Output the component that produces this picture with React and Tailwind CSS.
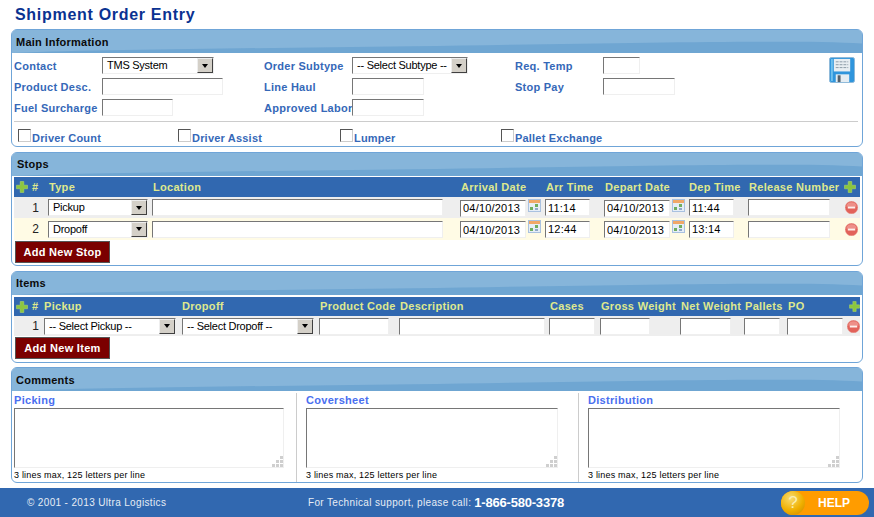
import React from 'react';

const font = { fontFamily: '"Liberation Sans", Arial, sans-serif' };

const inputCls =
  'h-[17px] border border-t-[#767676] border-l-[#767676] border-r-[#efefef] border-b-[#efefef] bg-white px-[2px] text-[11px] tracking-[0.2px] leading-[15px] text-black outline-none';

const stopCols = 'grid grid-cols-[34px_104px_308px_85px_59px_85px_59px_97px_15px]';
const itemCols = 'grid grid-cols-[30px_138px_137px_80px_150px_51px_80px_64px_43px_60px_13px]';

const stops = [
  { n: 1, type: 'Pickup', arr: '11:14', dep: '11:44', bg: 'bg-[#eeeeee] h-[21px]' },
  { n: 2, type: 'Dropoff', arr: '12:44', dep: '13:14', bg: 'bg-[#fffbe5] h-[22px]' },
];

const comments = [
  { label: 'Picking', w: 'w-[283px]', area: 'w-[270px]', border: true },
  { label: 'Coversheet', w: 'w-[273px]', area: 'w-[252px]', border: true },
  { label: 'Distribution', w: 'w-[260px]', area: 'w-[252px]', border: false },
];

function Plus({ className }) {
  return (
    <svg viewBox="0 0 12 12" className={className}>
      <path d="M4.2 0.5h3.6v3.7h3.7v3.6H7.8v3.7H4.2V7.8H0.5V4.2h3.7z" fill="#8cc63e" stroke="#b7dc6c" strokeWidth="0.5" />
    </svg>
  );
}

function Minus({ className }) {
  return (
    <svg viewBox="0 0 13 13" className={className}>
      <circle cx="6.5" cy="6.5" r="6.3" fill="#e2625a" stroke="#e98f88" strokeWidth="0.4" />
      <path d="M1.2 5.5A5.4 5.4 0 0 1 11.8 5.5Z" fill="#ee8f88" />
      <rect x="2.8" y="5.5" width="7.4" height="2" fill="#fdeeec" />
    </svg>
  );
}

function Calendar() {
  return (
    <svg viewBox="0 0 13 13" className="w-[13px] h-[13px] shrink-0">
      <rect x="0" y="0" width="13" height="13" fill="#a9c1e0" />
      <rect x="1" y="1" width="11" height="3" fill="#f0a868" />
      <rect x="1" y="4" width="11" height="8" fill="#e6eef7" />
      <rect x="2" y="8" width="3" height="3" fill="#6fae5f" />
      <rect x="7" y="5" width="3" height="3" fill="#6fae5f" />
      <rect x="7" y="9" width="3" height="2" fill="#8fa8c8" />
    </svg>
  );
}

function SaveIcon() {
  return (
    <svg viewBox="0 0 27 27" className="w-[26px] h-[26px]">
      <rect x="0.5" y="0.5" width="26" height="26" rx="2" fill="#2f95dc" stroke="#8fb8d8" />
      <rect x="2" y="2" width="2" height="23" fill="#6fc0ee" />
      <rect x="5" y="2" width="17" height="13" fill="#e8eef2" />
      <path d="M7 5h13M7 8h13M7 11h13" stroke="#8a9aa6" strokeWidth="1" strokeDasharray="3 1" />
      <rect x="7" y="18" width="14" height="8" fill="#e4edf3" />
      <rect x="9" y="19" width="3" height="7" fill="#55606a" />
    </svg>
  );
}

function Select({ text, className }) {
  return (
    <div className={`h-[17px] flex border border-t-[#767676] border-l-[#767676] border-r-[#efefef] border-b-[#efefef] bg-white ${className}`}>
      <span className="flex-1 min-w-0 pl-1 text-[11px] tracking-[-0.25px] leading-[15px] text-black whitespace-nowrap">{text}</span>
      <span className="w-[16px] h-[15px] shrink-0 flex items-center justify-center bg-[#d4d0c8] border border-t-[#eeeeee] border-l-[#eeeeee] border-r-[#404040] border-b-[#404040]">
        <span className="w-0 h-0 border-x-[3px] border-x-transparent border-t-[4px] border-t-black" />
      </span>
    </div>
  );
}

function Panel({ title, className, titleCls, children }) {
  return (
    <section className={`mx-[11px] w-[852px] border border-[#6fa5d8] rounded-[6px] overflow-hidden bg-white shrink-0 ${className}`}>
      <div className="relative bg-[#6fa6d2]">
        <svg viewBox="0 0 852 24" preserveAspectRatio="none" className="absolute inset-0 w-full h-full">
          <path d="M0 0H852V14C780 10 600 14 400 17C250 19 100 20 0 24Z" fill="#86b5da" />
        </svg>
        <h2 className={`relative h-[23px] text-[11px] font-bold tracking-[0.25px] text-[#0b0b0b] ${titleCls}`}>{title}</h2>
      </div>
      {children}
    </section>
  );
}

function Label({ children }) {
  return <label className="pt-px text-[11px] leading-[17px] font-bold tracking-[0.25px] text-[#3568b8] whitespace-nowrap">{children}</label>;
}

function Check({ label, className }) {
  return (
    <label className={`flex items-start gap-px ${className}`}>
      <span className="w-[13px] h-[13px] border border-t-[#555555] border-l-[#555555] border-r-[#cccccc] border-b-[#cccccc] bg-white" />
      <span className="mt-[2px] text-[11px] leading-[14px] font-bold tracking-[0.2px] text-[#3568b8] whitespace-nowrap">{label}</span>
    </label>
  );
}

function Th({ children }) {
  return <span className="pl-px text-[11px] font-bold tracking-[0.3px] text-[#dfe88e] whitespace-nowrap">{children}</span>;
}

function AddButton({ children }) {
  return (
    <button className="block h-[22px] w-[95px] bg-[#7b0000] border border-[#555555] text-[11px] font-bold tracking-[0.3px] text-white">
      {children}
    </button>
  );
}

export default function App() {
  return (
    <div className="w-[874px] h-[517px] overflow-hidden bg-white flex flex-col" style={font}>
      <h1 className="h-[29px] pl-[15px] text-[16px] leading-[30px] font-bold tracking-[0.7px] text-[#0a3291] shrink-0">
        Shipment Order Entry
      </h1>

      {/* Main Information */}
      <Panel title="Main Information" className="h-[118px]" titleCls="pl-1 leading-[24px]">
        <div className="relative px-[2px] pt-[4px]">
          <div className="grid grid-cols-[88px_162px_88px_163px_88px_1fr] gap-y-[4px] auto-rows-[17px]">
            <Label>Contact</Label>
            <Select text="TMS System" className="w-[112px]" />
            <Label>Order Subtype</Label>
            <Select text="-- Select Subtype --" className="w-[116px]" />
            <Label>Req. Temp</Label>
            <input className={`${inputCls} w-[37px]`} />

            <Label>Product Desc.</Label>
            <input className={`${inputCls} w-[121px]`} />
            <Label>Line Haul</Label>
            <input className={`${inputCls} w-[72px]`} />
            <Label>Stop Pay</Label>
            <input className={`${inputCls} w-[72px]`} />

            <Label>Fuel Surcharge</Label>
            <input className={`${inputCls} w-[71px]`} />
            <Label>Approved Labor</Label>
            <input className={`${inputCls} w-[72px]`} />
          </div>
          <div className="absolute top-[4px] right-[7px]">
            <SaveIcon />
          </div>
          <div className="mt-[5px] mr-[2px] border-t border-[#cccccc]" />
          <div className="flex pt-[7px] pl-[4px]">
            <Check label="Driver Count" className="w-[160px]" />
            <Check label="Driver Assist" className="w-[162px]" />
            <Check label="Lumper" className="w-[161px]" />
            <Check label="Pallet Exchange" />
          </div>
        </div>
      </Panel>

      {/* Stops */}
      <Panel title="Stops" className="h-[114px] mt-[5px]" titleCls="pl-[5px] leading-[22px]">
        <div className="pl-[2px] pr-[2px] pt-px">
          <div className={`${stopCols} h-[20px] bg-[#3168b0] items-center`}>
            <div className="flex items-center pl-[2px] gap-[4px]">
              <Plus className="w-[12px] h-[12px]" />
              <span className="text-[11px] font-bold text-[#dfe88e]">#</span>
            </div>
            <Th>Type</Th>
            <Th>Location</Th>
            <Th>Arrival Date</Th>
            <Th>Arr Time</Th>
            <Th>Depart Date</Th>
            <span className="text-[11px] font-bold tracking-[0.3px] text-[#dfe88e] whitespace-nowrap">Dep Time</span>
            <Th>Release Number</Th>
            <Plus className="w-[12px] h-[12px] -ml-[1px]" />
          </div>
          {stops.map((s) => (
            <div key={s.n} className={`${stopCols} ${s.bg} items-center`}>
              <span className="pr-[9px] text-right text-[12px] text-[#222222]">{s.n}</span>
              <Select text={s.type} className="w-[100px]" />
              <input className={`${inputCls} w-[291px]`} />
              <div className="flex items-start gap-[2px]">
                <input defaultValue="04/10/2013" className={`${inputCls} w-[66px] mt-px`} />
                <Calendar />
              </div>
              <input defaultValue={s.arr} className={`${inputCls} w-[45px]`} />
              <div className="flex items-start gap-[2px]">
                <input defaultValue="04/10/2013" className={`${inputCls} w-[66px] mt-px`} />
                <Calendar />
              </div>
              <input defaultValue={s.dep} className={`${inputCls} w-[45px]`} />
              <input className={`${inputCls} w-[82px]`} />
              <Minus className="w-[13px] h-[13px]" />
            </div>
          ))}
          <div className="pt-px pl-px">
            <AddButton>Add New Stop</AddButton>
          </div>
        </div>
      </Panel>

      {/* Items */}
      <Panel title="Items" className="h-[92px] mt-[5px]" titleCls="pl-1 leading-[22px]">
        <div className="px-[2px] pt-[2px]">
          <div className={`${itemCols} h-[19px] bg-[#3168b0] items-center`}>
            <div className="flex items-center pl-[2px] gap-[4px]">
              <Plus className="w-[12px] h-[12px]" />
              <span className="text-[11px] font-bold text-[#dfe88e]">#</span>
            </div>
            <span className="text-[11px] font-bold tracking-[0.3px] text-[#dfe88e] whitespace-nowrap">Pickup</span>
            <span className="text-[11px] font-bold tracking-[0.3px] text-[#dfe88e] whitespace-nowrap">Dropoff</span>
            <Th>Product Code</Th>
            <Th>Description</Th>
            <Th>Cases</Th>
            <Th>Gross Weight</Th>
            <Th>Net Weight</Th>
            <Th>Pallets</Th>
            <Th>PO</Th>
            <Plus className="w-[11px] h-[11px] ml-[2px]" />
          </div>
          <div className={`${itemCols} h-[20px] bg-[#eeeeee] items-center`}>
            <span className="pr-[5px] text-right text-[12px] text-[#222222]">1</span>
            <Select text="-- Select Pickup --" className="w-[132px]" />
            <Select text="-- Select Dropoff --" className="w-[132px]" />
            <input className={`${inputCls} w-[70px]`} />
            <input className={`${inputCls} w-[146px]`} />
            <input className={`${inputCls} w-[46px]`} />
            <input className={`${inputCls} w-[50px]`} />
            <input className={`${inputCls} w-[51px]`} />
            <input className={`${inputCls} w-[36px]`} />
            <input className={`${inputCls} w-[56px]`} />
            <Minus className="w-[13px] h-[13px]" />
          </div>
          <div className="pt-px pl-px">
            <AddButton>Add New Item</AddButton>
          </div>
        </div>
      </Panel>

      {/* Comments */}
      <Panel title="Comments" className="h-[116px] mt-[4px]" titleCls="pl-1 leading-[24px]">
        <div className="flex pl-[2px] pt-[2px]">
          {comments.map((c) => (
            <div key={c.label} className={`${c.w} h-[89px] ${c.border ? 'border-r border-[#cccccc] mr-[9px]' : ''}`}>
              <div className="text-[11px] leading-[15px] font-bold tracking-[0.3px] text-[#4a6ff0]">{c.label}</div>
              <div className={`relative ${c.area} h-[60px]`}>
                <textarea className="block w-full h-full resize-none border border-t-[#767676] border-l-[#767676] border-r-[#efefef] border-b-[#efefef] bg-white outline-none" />
                <svg viewBox="0 0 11 11" className="absolute right-[1px] bottom-[1px] w-[11px] h-[11px]">
                  <path d="M8 0h3v3H8zM8 4h3v3H8zM4 4h3v3H4zM8 8h3v3H8zM4 8h3v3H4zM0 8h3v3H0z" fill="#cfcfcf" />
                </svg>
              </div>
              <div className="mt-[1px] text-[9px] leading-[13px] tracking-[0.2px] text-black whitespace-nowrap">3 lines max, 125 letters per line</div>
            </div>
          ))}
        </div>
      </Panel>

      {/* Footer */}
      <footer className="mt-[5px] h-[29px] bg-[#3168b0] flex items-center shrink-0">
        <span className="w-[281px] ml-[27px] text-[10px] tracking-[0.35px] text-[#e6edf5]">© 2001 - 2013 Ultra Logistics</span>
        <span className="text-[10px] tracking-[0.35px] text-[#e6edf5] whitespace-nowrap">For Technical support, please call:</span>
        <span className="ml-[3px] text-[13px] tracking-[-0.2px] font-bold text-white whitespace-nowrap">1-866-580-3378</span>
        <div className="ml-auto mr-[5px] w-[88px] h-[24px] rounded-full bg-[#ff9c00] flex items-center">
          <span className="w-[24px] h-[24px] rounded-full bg-[radial-gradient(circle_at_40%_30%,#f7dc72,#f0b000_55%,#c88400)] text-center text-[17px] leading-[24px] text-[#fbeeb0]">?</span>
          <span className="ml-[13px] text-[12px] font-bold text-white">HELP</span>
        </div>
      </footer>
    </div>
  );
}
